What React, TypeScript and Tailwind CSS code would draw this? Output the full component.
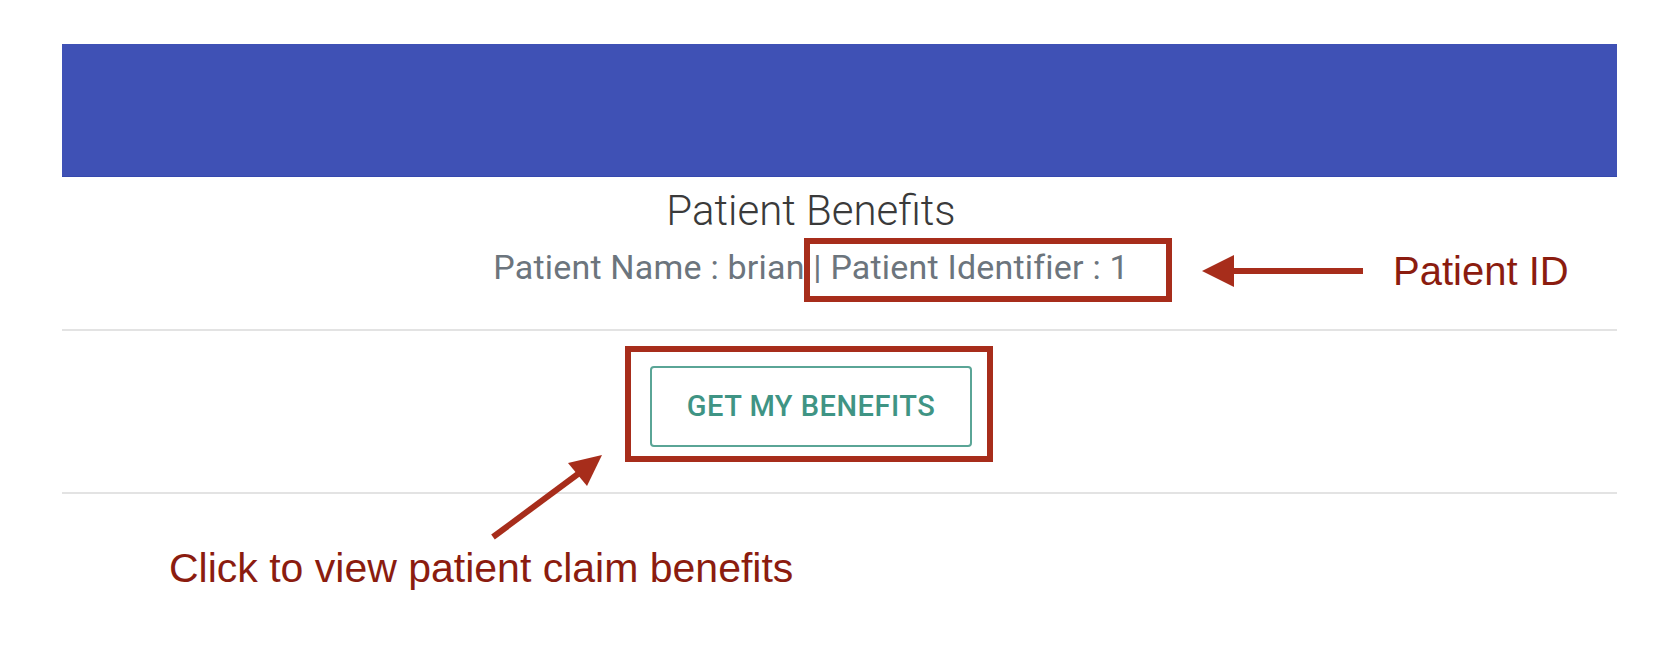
import React from 'react';

// Annotated screenshot: app page underneath, red call-outs drawn on top.
function Callouts() {
  return (
    <div className="pointer-events-none absolute inset-0">
      {/* box round the patient identifier */}
      <div className="absolute left-[804px] top-[238px] h-[64px] w-[368px] border-[6px] border-[#a72d1b]" />
      {/* box round the button */}
      <div className="absolute left-[625px] top-[346px] h-[116px] w-[368px] border-[6px] border-[#a72d1b]" />

      <svg className="absolute left-0 top-0" width="1667" height="655" viewBox="0 0 1667 655">
        <line x1="1228" y1="271" x2="1363" y2="271" stroke="#a72d1b" strokeWidth="6" />
        <polygon points="1202,271 1234,255 1234,287" fill="#a72d1b" />
        <line x1="493" y1="537" x2="582" y2="471" stroke="#a72d1b" strokeWidth="6" />
        <polygon points="602,455 568,463 587,486" fill="#a72d1b" />
      </svg>

      <span className="absolute left-[1393px] top-[248px] font-['Liberation_Sans',Arial,sans-serif] text-[40px] leading-[46px] text-[#8b1c0f]">
        Patient ID
      </span>
      <span className="absolute left-[169px] top-[545px] font-['Liberation_Sans',Arial,sans-serif] text-[41px] leading-[46px] text-[#8b1c0f]">
        Click to view patient claim benefits
      </span>
    </div>
  );
}

export default function App() {
  const patientName = 'brian';
  const patientId = 1;

  return (
    <div className="relative h-[655px] w-[1667px] overflow-hidden bg-white font-['Roboto',sans-serif]">
      <div className="ml-[62px] w-[1555px] pt-[44px]">
        <div className="h-[133px] border-b border-[#3548ad] bg-[#3f51b5]" />

        <div className="flex flex-col items-center pr-[57px]">
          <h1 className="mt-[10px] text-[42px] font-light leading-[48px] text-[#3a3a3a]">Patient Benefits</h1>
          <p className="mt-[12px] text-[34px] font-normal leading-[40px] tracking-[0.2px] text-[#6c757d]">
            Patient Name : {patientName} | Patient Identifier : {patientId}
          </p>
        </div>

        <div className="mt-[42px] h-[2px] bg-[#e3e3e3]" />

        <div className="flex justify-center pr-[57px] pt-[35px]">
          <button className="h-[81px] w-[322px] rounded-[4px] border-2 border-[#5aa596] text-[29px] font-medium uppercase tracking-[0.5px] text-[#3f9484]">
            Get my benefits
          </button>
        </div>

        <div className="mt-[45px] h-[2px] bg-[#e3e3e3]" />
      </div>

      <Callouts />
    </div>
  );
}
